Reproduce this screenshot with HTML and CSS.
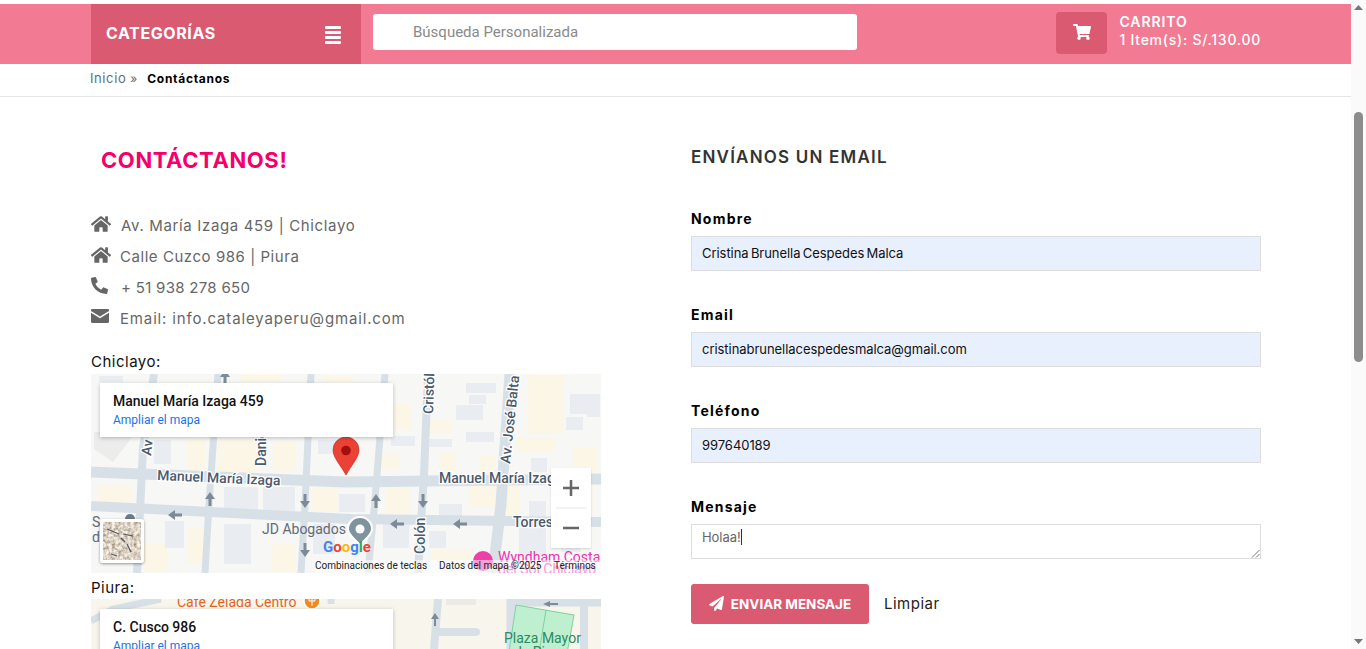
FILE: index.html
```html
<!DOCTYPE html>
<html lang="es">
<head>
<meta charset="utf-8">
<title>Contáctanos</title>
<link rel="stylesheet" href="styles.css">
</head>
<body>
<div class="window">
  <div class="page">
    <header class="topbar">
      <div class="container topbar-row">
        <div class="cat"><span>CATEGORÍAS</span>
          <span class="bars"><i></i><i></i><i></i><i></i></span>
        </div>
        <div class="search">Búsqueda Personalizada</div>
        <div class="cart">
          <div class="cart-btn"><svg class="cart-ico" viewBox="0 0 576 512"><path d="M528.12 301.319l47.273-208C578.806 78.301 567.391 64 551.99 64H159.208l-9.166-44.81C147.758 8.021 137.93 0 126.529 0H24C10.745 0 0 10.745 0 24v16c0 13.255 10.745 24 24 24h69.883l70.248 343.435C147.325 417.1 136 435.222 136 456c0 30.928 25.072 56 56 56s56-25.072 56-56c0-15.674-6.447-29.835-16.824-40h209.647C430.447 426.165 424 440.326 424 456c0 30.928 25.072 56 56 56s56-25.072 56-56c0-22.172-12.888-41.332-31.579-50.405l5.517-24.276c3.413-15.018-8.002-29.319-23.403-29.319H218.117l-6.545-32h293.145c11.206 0 20.92-7.754 23.403-18.681z"/></svg></div>
          <div class="cart-text"><b>CARRITO</b><span>1 Item(s): S/.130.00</span></div>
        </div>
      </div>
    </header>
    <nav class="crumbs">
      <div class="container crumb-row"><span class="crumb-link">Inicio</span><span class="crumb-sep">»</span><b>Contáctanos</b></div>
    </nav>
    <main class="container columns">
      <section class="left">
        <h1>CONTÁCTANOS!</h1>
        <ul class="info">
          <li><svg class="ico home" viewBox="0 0 576 512"><path d="M280.37 148.26L96 300.11V464a16 16 0 0 0 16 16l112.06-.29a16 16 0 0 0 15.92-16V368a16 16 0 0 1 16-16h64a16 16 0 0 1 16 16v95.64a16 16 0 0 0 16 16.05L464 480a16 16 0 0 0 16-16V300L295.67 148.26a12.19 12.19 0 0 0-15.3 0zM571.6 251.47L488 182.56V44.05a12 12 0 0 0-12-12h-56a12 12 0 0 0-12 12v72.61L318.47 43a48 48 0 0 0-61 0L4.34 251.47a12 12 0 0 0-1.6 16.9l25.5 31A12 12 0 0 0 45.15 301l235.22-193.74a12.19 12.19 0 0 1 15.3 0L530.9 301a12 12 0 0 0 16.9-1.6l25.5-31a12 12 0 0 0-1.7-16.93z"/></svg><span class="row-a">Av. María Izaga 459 | Chiclayo</span></li>
          <li><svg class="ico home" viewBox="0 0 576 512"><path d="M280.37 148.26L96 300.11V464a16 16 0 0 0 16 16l112.06-.29a16 16 0 0 0 15.92-16V368a16 16 0 0 1 16-16h64a16 16 0 0 1 16 16v95.64a16 16 0 0 0 16 16.05L464 480a16 16 0 0 0 16-16V300L295.67 148.26a12.19 12.19 0 0 0-15.3 0zM571.6 251.47L488 182.56V44.05a12 12 0 0 0-12-12h-56a12 12 0 0 0-12 12v72.61L318.47 43a48 48 0 0 0-61 0L4.34 251.47a12 12 0 0 0-1.6 16.9l25.5 31A12 12 0 0 0 45.15 301l235.22-193.74a12.19 12.19 0 0 1 15.3 0L530.9 301a12 12 0 0 0 16.9-1.6l25.5-31a12 12 0 0 0-1.7-16.93z"/></svg><span>Calle Cuzco 986 | Piura</span></li>
          <li><svg class="ico phone" viewBox="0 0 512 512"><path d="M493.4 24.6l-104-24c-11.3-2.6-22.9 3.3-27.5 13.9l-48 112c-4.2 9.8-1.4 21.3 6.9 28l60.6 49.6c-36 76.7-98.9 140.5-177.2 177.2l-49.6-60.6c-6.8-8.3-18.2-11.1-28-6.9l-112 48C3.9 366.5-2 378.1.6 389.4l24 104C27.1 504.2 36.7 512 48 512c256.1 0 464-207.5 464-464 0-11.2-7.7-20.9-18.6-23.4z"/></svg><span class="row-c">+ 51 938 278 650</span></li>
          <li><svg class="ico mail" viewBox="0 0 18 14"><path d="M1.2 0h15.6C17.5 0 18 .5 18 1.2v.7L9 7.4 0 1.9v-.7C0 .5.5 0 1.2 0zM0 3.8l9 5.5 9-5.5v9c0 .7-.5 1.2-1.2 1.2H1.2C.5 14 0 13.5 0 12.8z"/></svg><span class="row-d">Email: info.cataleyaperu@gmail.com</span></li>
        </ul>
        <p class="city city-first">Chiclayo:</p>
        <div class="map">
          <svg class="map-art" viewBox="0 0 510 199">
            <defs>
              <path id="ar" d="M0-7L5 0H1.500V7H-1.500V0H-5z" fill="#7c8b97"/>
              <filter id="noise" x="0" y="0" width="100%" height="100%">
                <feTurbulence type="fractalNoise" baseFrequency=".32" numOctaves="3" seed="4"/>
                <feColorMatrix values="1.100 0 0 0 .16  1.100 0 0 0 .09  1.100 0 0 0 0  0 0 0 0 1"/>
              </filter>
            </defs>
            <rect width="510" height="199" fill="#f7f7f6"/>
            <g fill="#fbf6e6">
              <rect x="437" y="0" width="35" height="60"/><rect x="425" y="63" width="40" height="15"/><rect x="338" y="46" width="23" height="14"/><rect x="289" y="80" width="20" height="15"/><rect x="348" y="80" width="17" height="17"/><rect x="388" y="82" width="17" height="18"/><rect x="378" y="110" width="27" height="24"/><rect x="415" y="110" width="13" height="34"/><rect x="482" y="73" width="24" height="24"/><rect x="6" y="112" width="34" height="16"/><rect x="96" y="66" width="19" height="31"/><rect x="127" y="66" width="40" height="34"/><rect x="182" y="68" width="22" height="29"/><rect x="221" y="113" width="26" height="24"/><rect x="96" y="154" width="17" height="36"/><rect x="53" y="170" width="23" height="27"/><rect x="180" y="170" width="24" height="27"/><rect x="300" y="30" width="20" height="26"/><rect x="150" y="0" width="40" height="8"/><rect x="232" y="2" width="30" height="6"/><rect x="295" y="110" width="24" height="30"/><rect x="340" y="176" width="40" height="12"/><rect x="478" y="110" width="24" height="26"/>
            </g>
            <g fill="#e9edf1">
              <rect x="479" y="20" width="17" height="20"/><rect x="496" y="20" width="13" height="23"/><rect x="475" y="43" width="17" height="13"/><rect x="375" y="9" width="30" height="10"/><rect x="378" y="21" width="17" height="9"/><rect x="365" y="31" width="27" height="15"/><rect x="338" y="65" width="23" height="8"/><rect x="348" y="130" width="23" height="15"/><rect x="438" y="127" width="17" height="17"/><rect x="338" y="157" width="17" height="17"/><rect x="428" y="154" width="27" height="26"/><rect x="470" y="158" width="20" height="20"/><rect x="63" y="66" width="17" height="24"/><rect x="133" y="113" width="34" height="27"/><rect x="172" y="113" width="32" height="24"/><rect x="227" y="66" width="27" height="14"/><rect x="74" y="147" width="19" height="27"/><rect x="133" y="150" width="27" height="40"/><rect x="222" y="150" width="22" height="30"/><rect x="248" y="120" width="26" height="18"/><rect x="300" y="62" width="24" height="10"/><rect x="8" y="2" width="24" height="6"/><rect x="440" y="84" width="16" height="14"/><rect x="292" y="150" width="26" height="24"/><rect x="375" y="58" width="28" height="10"/>
            </g>
            <g fill="none" stroke="#d8e0e7">
              <path d="M0 98L255 108L510 105" stroke-width="11"/>
              <path d="M0 132L260 145L510 148" stroke-width="10"/>
              <path d="M63 0L52 75L46 199" stroke-width="8"/>
              <path d="M127 0L118 130L114 199" stroke-width="7"/>
              <path d="M220 0L214 130L210 199" stroke-width="7"/>
              <path d="M294 0L284 126L277 199" stroke-width="7"/>
              <path d="M337 0L333 100L327 199" stroke-width="8"/>
              <path d="M419 0L410 130L402 199" stroke-width="11"/>
            </g>
            <path d="M3 58H45L22 88L3 75z" fill="#ececec"/>
            <use href="#ar" transform="translate(134 3)"/>
            <use href="#ar" transform="translate(119 125)"/>
            <use href="#ar" transform="translate(214 127) rotate(180)"/>
            <use href="#ar" transform="translate(84 141) rotate(-90)"/>
            <use href="#ar" transform="translate(214 176) rotate(180)"/>
            <use href="#ar" transform="translate(285 127)"/>
            <use href="#ar" transform="translate(332 127) rotate(180)"/>
            <use href="#ar" transform="translate(306 150) rotate(-90)"/>
            <use href="#ar" transform="translate(369 150) rotate(-90)"/>
            <g class="road-label" fill="#4b5a6d" stroke="#fff" stroke-width="2.500" paint-order="stroke">
              <text x="66" y="106" transform="rotate(2.500 66 106)">Manuel María Izaga</text>
              <text x="348" y="109">Manuel María Izaga</text>
              <text x="422" y="153">Torres</text>
              <text transform="translate(60 82) rotate(-84)">Av</text>
              <text transform="translate(175 92) rotate(-90)">Daniel</text>
              <text transform="translate(342 40) rotate(-88)">Cristób</text>
              <text transform="translate(334 180) rotate(-90)">Colón</text>
              <text transform="translate(419 90) rotate(-84)">Av. José Balta</text>
            </g>
            <text x="171" y="160" class="poi">JD Abogados</text>
            <text x="1" y="153" class="poi">S</text>
            <text x="1" y="168" class="poi">d</text>
            <circle cx="39" cy="145" r="5" fill="#6e7b85"/>
            <path d="M269 171C263 164 257 161 257 155a12 12 0 0 1 24 0c0 6-6 9-12 16z" fill="#7f939d" stroke="#fff" stroke-width="2"/>
            <circle cx="269" cy="155" r="4.500" fill="#fff"/>
            <text x="232" y="178" class="logo"><tspan fill="#4285f4">G</tspan><tspan fill="#ea4335">o</tspan><tspan fill="#fbbc05">o</tspan><tspan fill="#4285f4">g</tspan><tspan fill="#34a853">l</tspan><tspan fill="#ea4335">e</tspan></text>
            <circle cx="392" cy="187" r="10" fill="#f03ea8"/>
            <text x="407" y="188" class="pink">Wyndham Costa</text>
            <text x="407" y="200" class="pink">del Sol Chiclayo</text>
            <path d="M255 101C248 89 242 83 242 76a13 13 0 0 1 26 0c0 7-6 13-13 25z" fill="#ea4335" stroke="#c5221f" stroke-width=".6"/>
            <circle cx="255" cy="76.500" r="4.800" fill="#a50e0e"/>
            <rect x="224" y="186" width="286" height="13" fill="#fff" fill-opacity=".5"/>
            <g class="attrib"><text x="224" y="195">Combinaciones de teclas</text><text x="348" y="195">Datos del mapa ©2025</text><text x="463" y="195">Términos</text></g>
          </svg>
          <div class="card">
            <div class="card-title">Manuel María Izaga 459</div>
            <div class="card-link">Ampliar el mapa</div>
          </div>
          <div class="thumb"><svg viewBox="0 0 38 38"><rect width="38" height="38" filter="url(#noise)"/><path d="M4 7L16 12M20 12L30 14M18 16L22 20M8 32L14 34M24 22L28 30" stroke="#4f5763" stroke-width="1.200"/></svg></div>
          <div class="zoom">
            <svg viewBox="0 0 40 80"><path d="M20 12v16M12 20h16M12 60h16" stroke="#666" stroke-width="2.500" fill="none"/><path d="M5 40h30" stroke="#e6e6e6"/></svg>
          </div>
        </div>
        <p class="city">Piura:</p>
        <div class="map">
          <svg class="map-art" viewBox="0 0 510 199">
            <rect width="510" height="199" fill="#f8f5ec"/>
            <g fill="none" stroke="#d8e0e7">
              <path d="M0 22L22 10L70 0" stroke-width="7"/>
              <path d="M347 0L343 50" stroke-width="8"/>
              <path d="M345 33H385" stroke-width="8" stroke-linecap="round"/>
              <path d="M420 0V50M420 3H510" stroke-width="9"/>
              <path d="M493 0V50" stroke-width="8"/>
              <path d="M240 0V5" stroke-width="7"/>
            </g>
            <rect x="355" y="0" width="30" height="6" fill="#eceae5"/>
            <polygon points="425,6 483,16 475,60 417,60" fill="#bef0d0" stroke="#7ed0a0"/>
            <path d="M455 11L447 60" stroke="#7ed0a0"/>
            <path d="M344 14l-4 6h3v7h2v-7h3zM452 5l7-3v2h8v2h-8v2z" fill="#7c8b97"/>
            <text x="86" y="8" class="orange">Cafe Zelada Centro</text>
            <circle cx="221" cy="2" r="8" fill="#f08b22" stroke="#fff" stroke-width="1.500"/>
            <path d="M221 -2V7M218 -2V2H224V-2" stroke="#fff" fill="none"/>
            <text x="413" y="44" class="green">Plaza Mayor</text>
            <text x="423" y="58" class="green">de Piura</text>
          </svg>
          <div class="card card-low">
            <div class="card-title">C. Cusco 986</div>
            <div class="card-link">Ampliar el mapa</div>
          </div>
        </div>
      </section>
      <section class="right">
        <h2>ENVÍANOS UN EMAIL</h2>
        <div class="field"><label>Nombre</label><div class="input name">Cristina Brunella Cespedes Malca</div></div>
        <div class="field"><label>Email</label><div class="input">cristinabrunellacespedesmalca@gmail.com</div></div>
        <div class="field"><label>Teléfono</label><div class="input">997640189</div></div>
        <div class="field"><label>Mensaje</label>
          <div class="input area"><span>Holaa!</span><i class="caret"></i>
            <svg class="grip" viewBox="0 0 9 9"><path d="M8.500 1L1 8.500M8.500 5L5 8.500" stroke="#777" fill="none"/></svg>
          </div>
        </div>
        <div class="actions">
          <div class="send"><svg class="plane" viewBox="0 0 512 512"><path d="M476 3.2L12.5 270.6c-18.1 10.4-15.8 35.6 2.2 43.2L121 358.4l287.3-253.2c5.5-4.9 13.3 2.6 8.6 8.3L176 407v80.5c0 23.6 28.5 32.9 42.5 15.8L282 426l124.6 52.2c14.2 6 30.4-2.9 33-18.2l72-432C515 7.8 493.3-6.8 476 3.2z"/></svg>ENVIAR MENSAJE</div>
          <div class="clear">Limpiar</div>
        </div>
      </section>
    </main>
  </div>
  <aside class="scrollbar">
    <svg class="arrow" viewBox="0 0 9 5"><path d="M4.500 0L9 5H0z"/></svg>
    <div class="thumb-track"><div class="sb-thumb"></div></div>
    <svg class="arrow" viewBox="0 0 9 5"><path d="M4.500 5L9 0H0z"/></svg>
  </aside>
</div>
</body>
</html>
```
FILE: styles.css
```css
* { box-sizing: border-box; }
html, body { margin: 0; height: 100%; overflow: hidden; background: #fff; }
body { font-family: Inter, "Liberation Sans", sans-serif; color: #000; }
.window { display: flex; height: 649px; overflow: hidden; }
.page { flex: 1; min-width: 0; padding-top: 4px; }
.container { width: 1170px; margin-left: 91px; }
.topbar { height: 60px; background: #f27b93; }
.topbar-row { display: flex; height: 100%; align-items: stretch; }
.cat { width: 270px; background: #da5a72; color: #fff; display: flex; justify-content: space-between; align-items: center; padding: 0 20px 2px 15px; font-weight: 700; font-size: 16px; letter-spacing: .6px; }
.bars { display: flex; flex-direction: column; gap: 2px; width: 16px; margin-top: 4px; }
.bars i { display: block; height: 3px; background: #fff; border-radius: 1px; }
.search { width: 484px; height: 36px; margin: 10px 0 0 12px; background: #fff; border-radius: 3px; font: 15px/37px Roboto, sans-serif; color: #8a8a8a; padding-left: 40px; }
.cart { margin-left: auto; width: 205px; display: flex; gap: 12px; padding-top: 8px; }
.cart-btn { width: 52px; height: 42px; background: #da5a72; border-radius: 4px; display: flex; align-items: center; justify-content: center; }
.cart-ico { width: 18px; height: 16px; fill: #fff; margin-bottom: 2px; }
.cart-text { color: #fff; display: flex; flex-direction: column; font-size: 14px; line-height: 18px; padding-top: 1px; letter-spacing: .75px; white-space: nowrap; font-weight: 500; }
.cart-text b { font-weight: 600; letter-spacing: .9px; }
.crumbs { height: 33px; border-bottom: 1px solid #e6e6e6; }
.crumb-row { display: flex; align-items: center; height: 28px; font-size: 12px; margin-left: 90px; }
.crumb-link { color: #5a6f80; font-size: 13px; letter-spacing: .6px; }
.crumb-sep { color: #666; margin: 0 10px 0 4px; }
.crumb-row b { font-size: 12px; font-weight: 700; letter-spacing: .7px; }
.columns { display: flex; gap: 90px; }
.left { width: 510px; flex: none; }
.right { width: 570px; flex: none; }
h1 { margin: 49px 0 0 10px; color: #f5006a; font-size: 22px; line-height: 28px; font-weight: 700; letter-spacing: .6px; }
h2 { margin: 50px 0 0; color: #333; font-size: 17px; line-height: 20px; font-weight: 600; letter-spacing: 1.200px; }
.info { list-style: none; margin: 36px 0 0; padding: 0; font-size: 15px; color: #666; letter-spacing: .55px; }
.info li { height: 31px; display: flex; align-items: center; gap: 9px; }
.ico { width: 20px; height: 18px; fill: #666; flex: none; margin-top: -5px; }
.home { margin-top: -4px; }
.phone { width: 17px; height: 17px; transform: scaleX(-1); margin-right: 3px; }
.mail { width: 18px; height: 14px; margin-right: 2px; }
.row-a { letter-spacing: .65px; margin-left: 1px; }
.row-c { letter-spacing: .3px; margin-left: 1px; }
.row-d { letter-spacing: .85px; }
.city { margin: 0; font-size: 15px; line-height: 18px; height: 18px; letter-spacing: .5px; color: #111; }
.city-first { margin-top: 19px; margin-bottom: 3px; }
.city:not(.city-first) { margin-top: 6px; margin-bottom: 2px; }
.map { position: relative; width: 510px; height: 199px; overflow: hidden; }
.map-art { display: block; width: 510px; height: 199px; }
.road-label { font: 500 14px Roboto, sans-serif; }
.poi { font: 14px Roboto, sans-serif; fill: #5f6b78; }
.logo { font: 700 15px Roboto, sans-serif; }
.pink { font: 14px Roboto, sans-serif; fill: #ee2fb0; }
.attrib { font: 10px Roboto, sans-serif; fill: #222; }
.orange { font: 14px Roboto, sans-serif; fill: #e0661c; }
.green { font: 14px Roboto, sans-serif; fill: #2d8a5f; }
.card { position: absolute; left: 9px; top: 9px; width: 293px; height: 54px; background: #fff; box-shadow: 0 1px 4px rgba(0,0,0,.25); padding: 9px 13px; font-family: Roboto, sans-serif; }
.card-low { top: 10px; }
.card-title { font-size: 14px; line-height: 18px; font-weight: 500; color: #111; }
.card-link { font-size: 12px; line-height: 18px; margin-top: 1px; color: #1a73e8; }
.thumb { position: absolute; left: 9px; top: 145px; width: 44px; height: 44px; border: 3px solid #fff; border-radius: 3px; box-shadow: 0 1px 3px rgba(0,0,0,.4); overflow: hidden; }
.thumb svg { display: block; width: 38px; height: 38px; }
.zoom { position: absolute; left: 460px; top: 94px; width: 40px; height: 80px; background: #fff; box-shadow: 0 1px 2px rgba(0,0,0,.15); }
.zoom svg { display: block; width: 40px; height: 80px; }
.field { height: 96px; }
.field:first-of-type { margin-top: 43px; }
label { display: block; font-size: 14px; line-height: 18px; font-weight: 700; letter-spacing: 1.200px; margin-bottom: 8px; }
.input { height: 35px; background: #e8f0fe; border: 1px solid #ddd; padding: 0 10px; font-size: 13px; line-height: 33px; color: #111; letter-spacing: -.05px; }
.name { word-spacing: -1.300px; }
.area { position: relative; background: #fff; color: #666; line-height: 25px; }
.caret { display: inline-block; width: 1px; height: 16px; background: #333; vertical-align: -3px; }
.grip { position: absolute; right: 0; bottom: 0; width: 9px; height: 9px; }
.actions { display: flex; align-items: center; margin-top: -10px; }
.send { width: 178px; height: 40px; background: #da5a72; color: #fff; border-radius: 3px; display: flex; align-items: center; justify-content: center; gap: 7px; font-weight: 700; font-size: 13.5px; padding-bottom: 1px; }
.plane { width: 15px; height: 15px; fill: #fff; }
.clear { margin-left: 15px; font-size: 15px; color: #222; letter-spacing: .5px; padding-bottom: 2px; }
.scrollbar { width: 15px; flex: none; background: #fafafa; display: flex; flex-direction: column; align-items: center; padding: 5px 0; }
.arrow { width: 9px; height: 5px; fill: #777; flex: none; }
.thumb-track { flex: 1; width: 100%; padding: 102px 2px 0; }
.sb-thumb { height: 250px; background: #8c8c8c; border-radius: 6px; width: 9px; margin: 0 auto; }
```
